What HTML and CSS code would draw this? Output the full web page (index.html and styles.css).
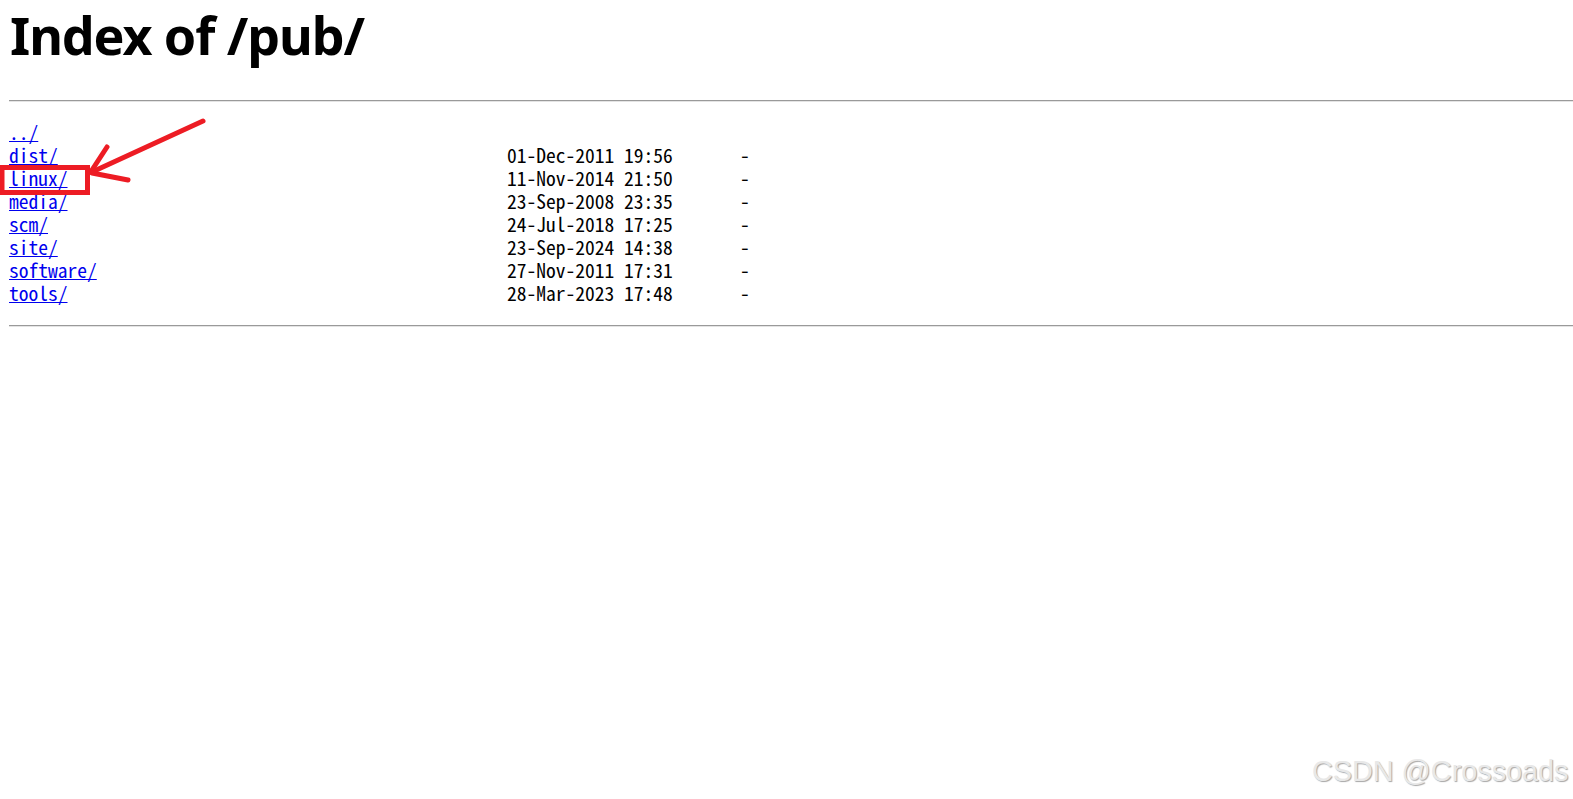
FILE: index.html
```html
<!DOCTYPE html>
<html>
<head>
<meta charset="utf-8">
<title>Index of /pub/</title>
<link rel="stylesheet" href="styles.css">
</head>
<body>
<h1 class="title">Index of /pub/</h1>
<hr class="rule rule-top">
<div class="listing">
  <div class="row"><a class="name" href="#">../</a><span class="date"></span><span class="size"></span></div>
  <div class="row"><a class="name" href="#">dist/</a><span class="date">01-Dec-2011 19:56</span><span class="size">-</span></div>
  <div class="row"><a class="name" href="#">linux/</a><span class="date">11-Nov-2014 21:50</span><span class="size">-</span></div>
  <div class="row"><a class="name" href="#">media/</a><span class="date">23-Sep-2008 23:35</span><span class="size">-</span></div>
  <div class="row"><a class="name" href="#">scm/</a><span class="date">24-Jul-2018 17:25</span><span class="size">-</span></div>
  <div class="row"><a class="name" href="#">site/</a><span class="date">23-Sep-2024 14:38</span><span class="size">-</span></div>
  <div class="row"><a class="name" href="#">software/</a><span class="date">27-Nov-2011 17:31</span><span class="size">-</span></div>
  <div class="row"><a class="name" href="#">tools/</a><span class="date">28-Mar-2023 17:48</span><span class="size">-</span></div>
</div>
<hr class="rule rule-bottom">

<svg class="annotation" width="220" height="200" viewBox="0 0 220 200" aria-hidden="true">
  <rect x="2" y="167.5" width="85.5" height="25" fill="none" stroke="#ED1C24" stroke-width="5"/>
  <g stroke="#ED1C24" stroke-width="5" stroke-linecap="round" fill="none">
    <line x1="203" y1="121" x2="92" y2="172"/>
    <line x1="107" y1="147" x2="92" y2="170"/>
    <line x1="92" y1="173" x2="128" y2="180"/>
  </g>
</svg>

<div class="watermark">CSDN @Crossoads</div>
</body>
</html>
```

FILE: styles.css
```css
html, body {
  margin: 0;
  padding: 0;
  background: #ffffff;
}

body {
  padding-left: 9px;
  position: relative;
  min-height: 799px;
  overflow: hidden;
}

.title {
  font-family: "Noto Sans", "Open Sans", sans-serif;
  font-weight: 700;
  font-size: 52px;
  line-height: 64px;
  letter-spacing: -1.1px;
  margin: 3px 0 0 1px;
  color: #000;
}

.rule {
  border: 0;
  border-top: 1px solid #9a9a9a;
  border-bottom: 1px solid #e4e4e4;
  height: 0;
  margin: 0;
}

.rule-top {
  margin-top: 33px;
}

.listing {
  margin-top: 18px;
  margin-bottom: 21px;
  font-family: "Noto Sans Mono CJK SC", "Liberation Mono", monospace;
  font-size: 19.5px;
  line-height: 23px;
  color: #000;
}

.row {
  display: grid;
  grid-template-columns: 498px 233px auto;
  height: 23px;
  white-space: pre;
}

.name {
  color: #0000ee;
  text-decoration: underline;
  justify-self: start;
}

.annotation {
  position: absolute;
  left: 0;
  top: 0;
  pointer-events: none;
}

.watermark {
  position: absolute;
  left: 1312px;
  top: 755px;
  font-family: "Liberation Sans", Arial, sans-serif;
  font-size: 28.8px;
  line-height: 32px;
  color: #e8e8e8;
  text-shadow: 1px 1px 1px rgba(0, 0, 0, 0.35);
  white-space: nowrap;
}
```
